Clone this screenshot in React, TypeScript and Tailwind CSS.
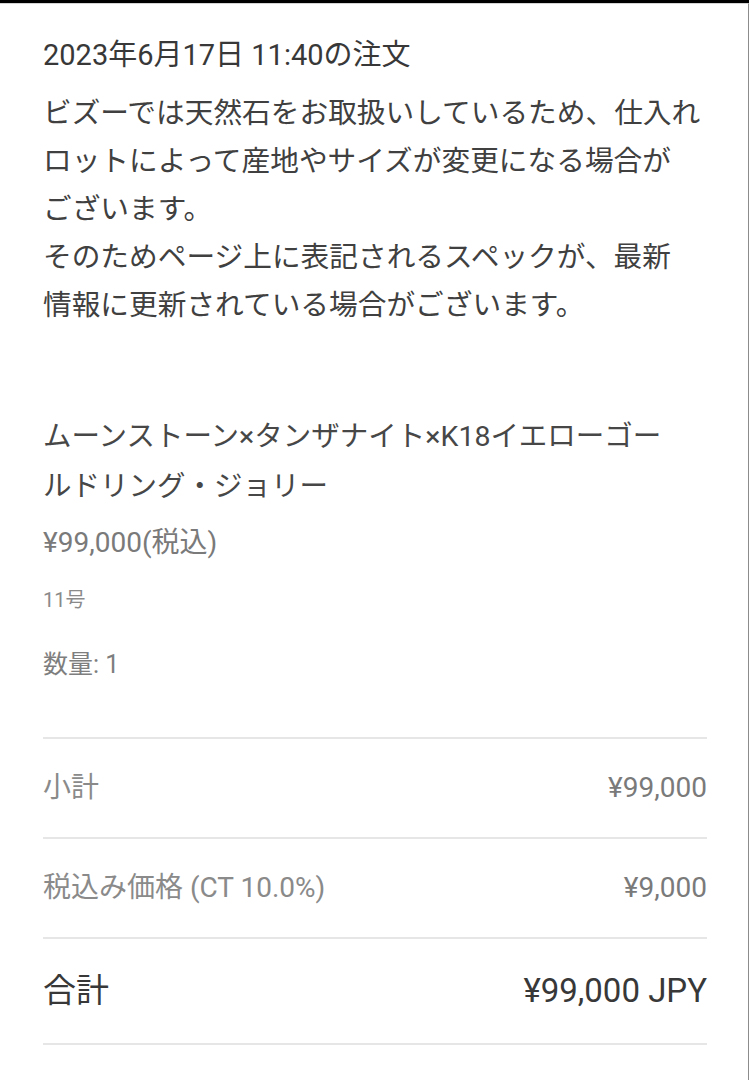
import React from "react";

const FONT = "font-['Roboto','Noto_Sans_CJK_JP',sans-serif]";

type Row = { label: string; value: string; strong?: boolean };

const ROWS: Row[] = [
  { label: "小計", value: "¥99,000" },
  { label: "税込み価格 (CT 10.0%)", value: "¥9,000" },
  { label: "合計", value: "¥99,000 JPY", strong: true },
];

const Divider: React.FC = () => <div className="h-[2px] bg-[#e6e6e6]" />;

const App: React.FC = () => {
  return (
    <div className={`w-[749px] h-[1080px] bg-white overflow-hidden border-t-[3px] border-black ${FONT}`}>
      <div className="h-full border-t border-t-[#d4d4d4] border-r border-r-[#8c8c8c] pl-[43px] pr-[41px] pt-[27px]">
        {/* Order header */}
        <h1 className="text-[29px] leading-[48px] text-[#383838]">2023年6月17日 11:40の注文</h1>

        {/* Notice */}
        <p className="mt-[10px] text-[28.7px] leading-[48px] text-[#404040]">
          ビズーでは天然石をお取扱いしているため、仕入れ
          <br />
          ロットによって産地やサイズが変更になる場合が
          <br />
          ございます。
          <br />
          そのためページ上に表記されるスペックが、最新
          <br />
          情報に更新されている場合がございます。
        </p>

        {/* Item */}
        <div className="mt-[83px]">
          <p className="text-[28.5px] leading-[50px] text-[#474747]">
            ムーンストーン×タンザナイト×K18イエローゴー
            <br />
            ルドリング・ジョリー
          </p>
          <p className="mt-[11px] text-[28px] leading-[40px] text-[#7a7a7a]">¥99,000(税込)</p>
          <p className="mt-[22px] text-[20px] leading-[30px] text-[#8a8a8a]">11号</p>
          <p className="mt-[32px] text-[25px] leading-[36px] text-[#7e7e7e]">数量: 1</p>
        </div>

        {/* Totals */}
        <div className="mt-[54px]">
          <Divider />
          {ROWS.map((r) => (
            <React.Fragment key={r.label}>
              <div
                className={`flex items-center justify-between ${
                  r.strong ? "h-[104px] text-[33px] text-[#383838]" : "h-[98px] text-[28px] text-[#8a8a8a]"
                }`}
              >
                <span>{r.label}</span>
                <span className={r.strong ? "" : "text-[#7a7a7a]"}>{r.value}</span>
              </div>
              <Divider />
            </React.Fragment>
          ))}
        </div>
      </div>
    </div>
  );
};

export default App;
